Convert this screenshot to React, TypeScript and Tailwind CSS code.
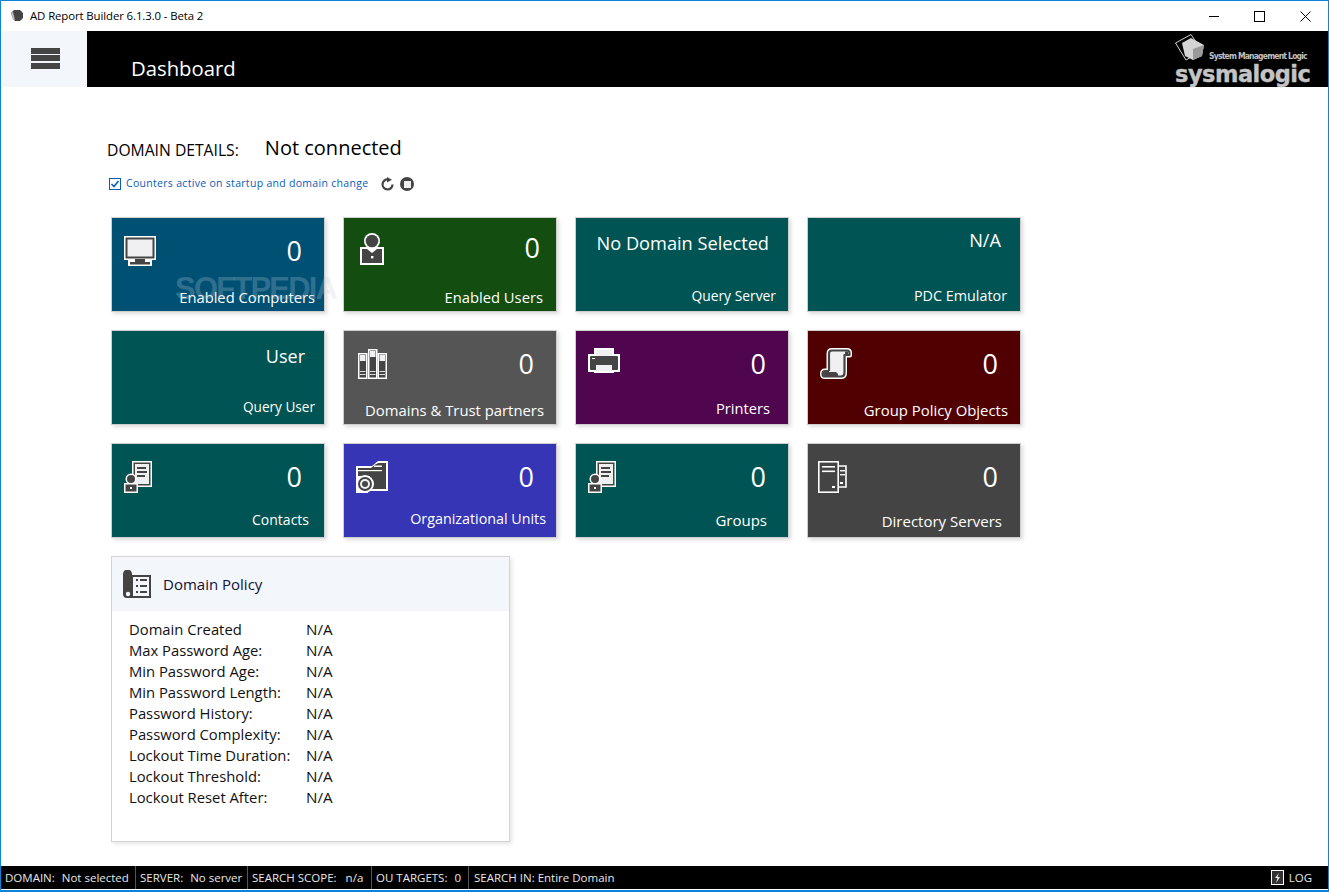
import React from "react";

const I = ({ w, h, children, className = "" }: { w: number; h: number; children: React.ReactNode; className?: string }) => (
  <svg width={w} height={h} viewBox={`0 0 ${w} ${h}`} className={`shrink-0 ${className}`}>{children}</svg>
);
const D = "#444444";
const L = "#f0f0f2";

const Monitor = ({ className }: { className: string }) => (
  <I w={32} h={30} className={className}>
    <rect width="32" height="24" fill="#fff" />
    <rect x="4" y="22" width="24" height="8" fill="#fff" />
    <rect x="1.500" y="1.500" width="29" height="21" fill={D} />
    <rect x="3.500" y="3.500" width="25" height="17" fill={L} />
    <rect x="11" y="23" width="10" height="3" fill={D} />
    <rect x="6" y="26" width="20" height="2.500" fill={D} />
  </I>
);
const UserIcon = ({ className }: { className: string }) => (
  <I w={24} h={32} className={className}>
    <rect y="14" width="24" height="18" fill="#fff" />
    <rect x="2" y="16" width="20" height="14" fill={D} />
    <circle cx="12" cy="8" r="8" fill="#fff" />
    <circle cx="12" cy="8" r="6.300" fill={D} />
    <path d="M7 16h10l-5 4z" fill="#fff" />
    <rect x="11" y="23" width="2.400" height="2.400" fill="#fff" />
  </I>
);
const Book = ({ x, y }: { x: number; y: number }) => (
  <g>
    <rect x={x} y={y} width="9.500" height={30 - y} fill="#fff" />
    <rect x={x + 1.5} y={y + 1.5} width="6.500" height={27 - y} fill={D} />
    <rect x={x + 2} y={y + 2} width="5.500" height="6" fill={L} />
    <rect x={x + 2} y="22" width="5.500" height="1" fill="#ddd" />
    <rect x={x + 2} y="25" width="5.500" height="1" fill="#ddd" />
  </g>
);
const Books = ({ className }: { className: string }) => (
  <I w={29} h={30} className={className}>
    <Book x={0} y={4} />
    <Book x={10} y={0} />
    <Book x={19.5} y={4} />
  </I>
);
const Printer = ({ className }: { className: string }) => (
  <I w={32} h={25} className={className}>
    <path d="M6 0h20v6h6v18H26v1H6v-1H0V6h6z" fill="#fff" />
    <rect x="2" y="8" width="28" height="14" rx="1" fill={D} />
    <rect x="8" y="2" width="16" height="6" fill={L} />
    <rect x="8" y="17" width="16" height="6" fill={L} />
    <rect x="4" y="10" width="3" height="1" fill="#fff" />
  </I>
);
const scrollPath = "M9 23V5.500Q9 2.500 12 2.500H27Q29.500 2.500 29.500 5V7H24.500V25Q24.500 28.500 21 28.500H5Q2.500 28.500 2.500 26Q2.500 23 5 23H9";
const Scroll = ({ className }: { className: string }) => (
  <I w={32} h={31} className={className}>
    <path d={scrollPath + "Z"} fill="#fff" stroke="#fff" strokeWidth="5" strokeLinejoin="round" />
    <path d={scrollPath} fill={L} stroke={D} strokeWidth="2.200" strokeLinejoin="round" />
    <path d="M3 27Q3 24 5 24H16L18 26V28H5z" fill={D} />
    <path d="M25 7V3.500H28V7z" fill={D} />
  </I>
);
const Contact = ({ className }: { className: string }) => (
  <I w={28} h={32} className={className}>
    <rect x="8" width="20" height="26" fill="#fff" />
    <rect x="9.500" y="1.500" width="17" height="23" fill={D} />
    <rect x="11" y="3" width="14" height="20" fill={L} />
    <rect x="13" y="6" width="9" height="2" fill={D} />
    <rect x="13" y="10" width="10" height="2" fill={D} />
    <rect x="13" y="14" width="8" height="2" fill={D} />
    <rect y="22" width="14" height="10" fill="#fff" />
    <circle cx="7" cy="18" r="5.500" fill="#fff" />
    <rect x="1.500" y="23.500" width="11" height="7" fill={D} />
    <circle cx="7" cy="18" r="4" fill={D} />
    <rect x="6" y="26" width="2" height="2" fill="#fff" />
  </I>
);
const Folder = ({ className }: { className: string }) => (
  <I w={32} h={32} className={className}>
    <path d="M0 5h16l6-5h10v30H12v2H0z" fill="#fff" />
    <path d="M2 7h14l6-5h8v26H14V15H2z" fill={D} />
    <path d="M2 7h13l5-4h7v5H2z" fill={D} />
    <rect x="18" y="4.500" width="8" height="1.500" fill="#fff" />
    <rect x="2" y="9" width="24" height="1.200" fill="#fff" />
    <circle cx="9" cy="23" r="9" fill="#fff" />
    <circle cx="9" cy="23" r="7" fill={D} />
    <circle cx="9" cy="23" r="5" fill={L} />
    <circle cx="9" cy="23" r="3" fill={D} />
  </I>
);
const Servers = ({ className }: { className: string }) => (
  <I w={29} h={32} className={className}>
    <path d="M21 5h7v21h-7" fill="none" stroke="#fff" strokeWidth="1.600" />
    <rect x="0.800" y="0.800" width="19.400" height="30.400" fill="none" stroke="#fff" strokeWidth="1.600" />
    <rect x="4" y="5" width="13" height="1.600" fill="#fff" />
    <rect x="4" y="9.500" width="13" height="1.600" fill="#fff" />
    <rect x="14" y="25" width="3" height="2" fill="#fff" />
    <rect x="22" y="9" width="5" height="1.400" fill="#fff" />
    <rect x="22" y="13" width="5" height="1.400" fill="#fff" />
    <rect x="22" y="21" width="3" height="2" fill="#fff" />
  </I>
);
const PolicyIcon = () => (
  <I w={28} h={28}>
    <path d="M0 4a4.500 4.500 0 0 1 9 0v1h19v23H4a4 4 0 0 1-4-4z" fill={D} />
    <circle cx="5" cy="24" r="2.200" fill="#f3f6fb" />
    <rect x="10" y="7" width="16" height="19" fill="#f3f6fb" />
    <rect x="13" y="9" width="2" height="2" fill={D} />
    <rect x="17" y="9" width="7" height="2" fill={D} />
    <rect x="13" y="15" width="2" height="2" fill={D} />
    <rect x="17" y="15" width="7" height="2" fill={D} />
    <rect x="13" y="21" width="2" height="2" fill={D} />
    <rect x="17" y="21" width="7" height="2" fill={D} />
  </I>
);

type C = { bg: string; value: string; vc: string; label: string; lc: string; icon?: React.ReactNode };
const cards: C[] = [
  { bg: "bg-[#005074]", value: "0", vc: "mt-[15px] mr-[22px] text-[27px]", label: "Enabled Computers", lc: "mb-[3px] mr-[9px] text-[14.750px]", icon: <Monitor className="mt-[18px] ml-[12px]" /> },
  { bg: "bg-[#134d10]", value: "0", vc: "mt-[12px] mr-[16px] text-[27px]", label: "Enabled Users", lc: "mb-[3px] mr-[13px] text-[14.750px]", icon: <UserIcon className="mt-[15px] ml-[16px]" /> },
  { bg: "bg-[#005453]", value: "No Domain Selected", vc: "mt-[7px] mr-[19px] text-[18.200px]", label: "Query Server", lc: "mb-[4px] mr-[12px] text-[13.850px]" },
  { bg: "bg-[#005453]", value: "N/A", vc: "mt-[4px] mr-[19px] text-[18.200px]", label: "PDC Emulator", lc: "mb-[4px] mr-[13px] text-[14.350px]" },
  { bg: "bg-[#005453]", value: "User", vc: "mt-[7px] mr-[19px] text-[18px]", label: "Query User", lc: "mb-[6px] mr-[9px] text-[13.600px]" },
  { bg: "bg-[#555555]", value: "0", vc: "mt-[15px] mr-[22px] text-[27px]", label: "Domains & Trust partners", lc: "mb-[3px] mr-[12px] text-[14.850px]", icon: <Books className="mt-[18px] ml-[14px]" /> },
  { bg: "bg-[#50064f]", value: "0", vc: "mt-[15px] mr-[22px] text-[27px]", label: "Printers", lc: "mb-[5px] mr-[18px] text-[14.700px]", icon: <Printer className="mt-[17px] ml-[12px]" /> },
  { bg: "bg-[#500000]", value: "0", vc: "mt-[15px] mr-[22px] text-[27px]", label: "Group Policy Objects", lc: "mb-[3px] mr-[12px] text-[14.900px]", icon: <Scroll className="mt-[17px] ml-[12px]" /> },
  { bg: "bg-[#005453]", value: "0", vc: "mt-[15px] mr-[22px] text-[27px]", label: "Contacts", lc: "mb-[6px] mr-[15px] text-[14px]", icon: <Contact className="mt-[17px] ml-[12px]" /> },
  { bg: "bg-[#3535b5]", value: "0", vc: "mt-[15px] mr-[22px] text-[27px]", label: "Organizational Units", lc: "mb-[7px] mr-[10px] text-[14.300px]", icon: <Folder className="mt-[17px] ml-[12px]" /> },
  { bg: "bg-[#005453]", value: "0", vc: "mt-[15px] mr-[22px] text-[27px]", label: "Groups", lc: "mb-[6px] mr-[21px] text-[15px]", icon: <Contact className="mt-[17px] ml-[12px]" /> },
  { bg: "bg-[#444444]", value: "0", vc: "mt-[15px] mr-[22px] text-[27px]", label: "Directory Servers", lc: "mb-[5px] mr-[18px] text-[15px]", icon: <Servers className="mt-[17px] ml-[10px]" /> },
];

const policy = ["Domain Created", "Max Password Age:", "Min Password Age:", "Min Password Length:", "Password History:", "Password Complexity:", "Lockout Time Duration:", "Lockout Threshold:", "Lockout Reset After:"];

const Status = ({ a, b, w, gap }: { a: string; b: string; w: string; gap: string }) => (
  <div className={`flex h-full items-center border-r border-[#555] pl-[4px] ${w}`}>
    <span>{a}</span>
    <span className={gap}>{b}</span>
  </div>
);

export default function App() {
  return (
    <div className="flex h-[892px] w-[1329px] flex-col overflow-hidden border border-b-2 border-[#0b83da] bg-white font-['Open_Sans',sans-serif] text-black">
      {/* title bar */}
      <div className="flex h-[30px] shrink-0 items-center">
        <svg width="14" height="12" viewBox="0 0 14 12" className="ml-[9px]">
          <path d="M1 3l3-3 6 0 3 3v5l-3 3H5L3 9z" fill="#444" />
          <path d="M1 3l2-1 2 8-2-1z" fill="#bbb" />
        </svg>
        <span className="ml-[6px] text-[11.400px] tracking-[-0.1px]">AD Report Builder 6.1.3.0 - Beta 2</span>
        <div className="ml-auto flex items-center">
          <svg width="11" height="11" viewBox="0 0 11 11" className="mr-[34px]"><path d="M0 5.500h10" stroke="#000" strokeWidth="1" /></svg>
          <svg width="11" height="11" viewBox="0 0 11 11" className="mr-[35px]"><rect x="0.500" y="0.500" width="10" height="10" fill="none" stroke="#000" /></svg>
          <svg width="11" height="11" viewBox="0 0 11 11" className="mr-[17px]"><path d="M0.500 0.500l10 10M10.500 0.500l-10 10" stroke="#000" strokeWidth="1" /></svg>
        </div>
      </div>
      {/* header */}
      <div className="ml-px flex h-[56px] shrink-0 bg-black">
        <div className="flex h-full w-[85px] shrink-0 items-center justify-center bg-[#f3f6fb]">
          <div className="ml-[1px] mt-[-2px] flex flex-col gap-[1.500px]">
            <div className="h-[6px] w-[29px] bg-[#444]" />
            <div className="h-[6px] w-[29px] bg-[#444]" />
            <div className="h-[6px] w-[29px] bg-[#444]" />
          </div>
        </div>
        <div className="ml-[44px] mt-[22px] text-[20.300px] font-medium leading-[30px] text-white">Dashboard</div>
        <div className="ml-auto mr-[18px] flex w-[135px] flex-col">
          <div className="flex h-[33px] items-end">
            <svg width="30" height="27" viewBox="0 0 30 27" className="mb-[3px] shrink-0">
              <path d="M0.500 9L16 0.500 27 17 11 26z" fill="none" stroke="#d0d0d0" strokeWidth="1" />
              <path d="M7 9l9-5 13 7-2 11-9 4-8-4z" fill="#d4d4d4" />
              <path d="M18 15l11-4-2 11-9 4z" fill="#9a9a9a" />
            </svg>
            <span className="mb-[1px] ml-[4px] font-['DejaVu_Sans_Condensed','DejaVu_Sans',sans-serif] text-[8.500px] font-bold leading-[14px] tracking-[-0.8px] whitespace-nowrap text-[#c0c0c0]">System Management Logic</span>
          </div>
          <div className="mt-[-1px] font-['DejaVu_Sans',sans-serif] text-[22.500px] font-bold leading-[22px] tracking-[-0.5px] text-[#c4c4c4] [-webkit-text-stroke:0.4px_#c4c4c4]">sysmalogic</div>
        </div>
      </div>
      {/* main */}
      <div className="relative flex-1 pl-[106px]">
        <div className="flex h-[75px] items-end">
          <div className="text-[15.700px] font-medium leading-[24px]">DOMAIN DETAILS:</div>
          <div className="mb-[-1px] ml-[26px] text-[20px] leading-[30px]">Not connected</div>
        </div>
        <div className="mt-[13px] flex h-[18px] items-center">
          <span className="ml-[2px] flex h-[12px] w-[12px] items-center justify-center border border-[#0a5cb8] bg-white">
            <svg width="10" height="10" viewBox="0 0 10 10"><path d="M1.500 5l2.500 2.500L8.500 2" fill="none" stroke="#0a5cb8" strokeWidth="1.600" /></svg>
          </span>
          <span className="ml-[5px] text-[10.500px] tracking-[0.3px] text-[#0a5cb8]">Counters active on startup and domain change</span>
          <svg width="14" height="14" viewBox="0 0 14 14" className="ml-[13px]">
            <path d="M11.500 7.500A5 5 0 1 1 7 2.500" fill="none" stroke="#444" strokeWidth="2.200" />
            <path d="M6 0l5 2.800L6 5.500z" fill="#444" />
          </svg>
          <span className="ml-[5px] flex h-[14px] w-[14px] items-center justify-center rounded-full bg-[#444]">
            <span className="h-[7px] w-[7px] bg-[#eee]" />
          </span>
        </div>
        <div className="ml-[4px] mt-[24px] grid w-[910px] grid-cols-[repeat(4,214px)] gap-[18px]">
          {cards.map((c) => (
            <div key={c.label} className={`flex h-[95px] flex-col justify-between border border-[#cfcfcf] text-white shadow-[2px_2px_4px_rgba(0,0,0,0.14)] ${c.bg}`}>
              <div className="flex items-start justify-between">
                {c.icon ?? <span />}
                <span className={`leading-[36px] ${c.vc}`}>{c.value}</span>
              </div>
              <div className={`text-right leading-[22px] ${c.lc}`}>{c.label}</div>
            </div>
          ))}
          <div className="col-span-2 h-[286px] w-[399px] border border-[#d4d4d4] shadow-[2px_2px_4px_rgba(0,0,0,0.1)]">
            <div className="flex h-[54px] items-center bg-[#f3f6fb] pl-[11px]">
              <PolicyIcon />
              <span className="ml-[12px] text-[15px] text-[#111133]">Domain Policy</span>
            </div>
            <div className="flex flex-col pl-[17px] pt-[8px]">
              {policy.map((p) => (
                <div key={p} className="flex h-[21px] items-center text-[14.800px] text-[#111]">
                  <span className="w-[177px]">{p}</span>
                  <span className="text-[15.200px] leading-[21px]">N/A</span>
                </div>
              ))}
            </div>
          </div>
        </div>
        <div className="pointer-events-none absolute left-[174px] top-[184px] font-['Liberation_Sans',sans-serif] text-[31px] font-bold leading-[36px] tracking-[-1.8px] whitespace-nowrap text-[rgba(195,210,220,0.26)]">SOFTPEDIA</div>
      </div>
      {/* status bar */}
      <div className="mb-px flex h-[23px] shrink-0 items-center bg-black text-[11.500px] text-[#e8e8e8]">
        <Status a="DOMAIN:" b="Not selected" w="w-[135px]" gap="ml-[7px]" />
        <Status a="SERVER:" b="No server" w="w-[112px]" gap="ml-[7px]" />
        <Status a="SEARCH SCOPE:" b="n/a" w="w-[124px]" gap="ml-[9px]" />
        <Status a="OU TARGETS:" b="0" w="w-[97px]" gap="ml-[7px]" />
        <div className="pl-[5px]">SEARCH IN: Entire Domain</div>
        <div className="ml-auto mr-[16px] flex items-center">
          <span className="flex h-[15px] w-[13px] items-center justify-center border border-white bg-[#333] text-white">
            <svg width="7" height="10" viewBox="0 0 7 10"><path d="M5 0L1 5h2.500L2 10l4-6H3.500z" fill="#eee" /></svg>
          </span>
          <span className="ml-[5px]">LOG</span>
        </div>
      </div>
    </div>
  );
}
